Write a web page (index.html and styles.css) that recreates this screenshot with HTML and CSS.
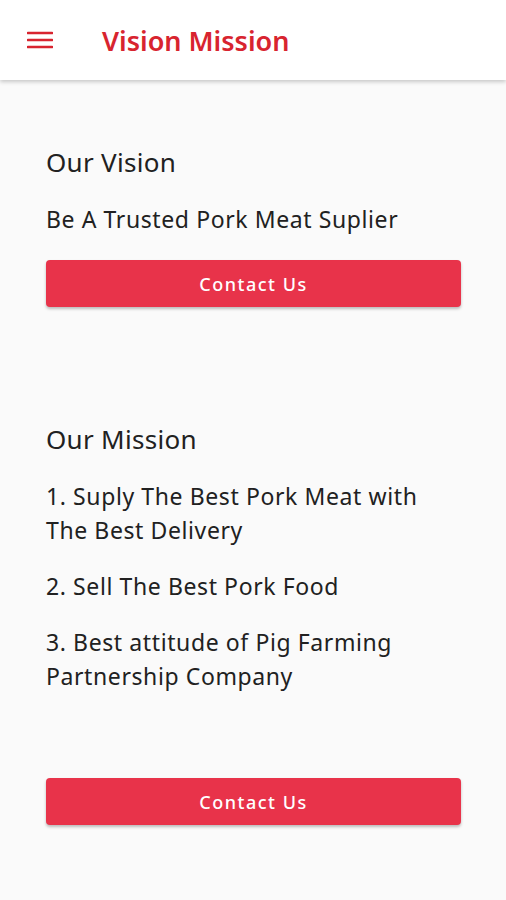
FILE: index.html
```html
<!DOCTYPE html>
<html lang="en">
<head>
    <meta charset="UTF-8">
    <meta name="viewport" content="width=device-width, initial-scale=1.0">
    <title>Vision Mission</title>
    <link rel="stylesheet" href="styles.css">
</head>
<body>
    <header class="app-bar">
        <button class="menu-btn" aria-label="Menu">
            <svg width="26" height="18" viewBox="0 0 26 18">
                <path d="M1 2h24M1 9h24M1 16h24" stroke="#d8242f" stroke-width="2.6" stroke-linecap="round"/>
            </svg>
        </button>
        <h1 class="app-title">Vision Mission</h1>
    </header>

    <main class="content">
        <section class="block vision">
            <h2>Our Vision</h2>
            <p>Be A Trusted Pork Meat Suplier</p>
            <button class="contact-btn">Contact Us</button>
        </section>

        <section class="block mission">
            <h2>Our Mission</h2>
            <p>1. Suply The Best Pork Meat with The Best Delivery</p>
            <p>2. Sell The Best Pork Food</p>
            <p>3. Best attitude of Pig Farming Partnership Company</p>
            <button class="contact-btn">Contact Us</button>
        </section>
    </main>
</body>
</html>
```

FILE: styles.css
```css
body {
    font-family: "Noto Sans", "Open Sans", sans-serif;
    margin: 0;
    padding: 0;
    background-color: #fafafa;
    color: #212121;
    height: 900px;
    overflow: hidden;
}
.app-bar {
    height: 80px;
    background: #ffffff;
    display: flex;
    align-items: center;
    box-shadow: 0 2px 4px rgba(0, 0, 0, 0.2);
    position: relative;
}
.menu-btn {
    background: none;
    border: none;
    padding: 0;
    margin-left: 27px;
    width: 26px;
    height: 18px;
    display: flex;
}
.app-title {
    margin: 0 0 0 49px;
    font-size: 27px;
    font-weight: 600;
    color: #d8242f;
}
.content {
    padding: 66px 45px 0 46px;
}
.block h2 {
    font-size: 26px;
    font-weight: 400;
    line-height: 32px;
    letter-spacing: 0.3px;
    margin: 0 0 24px;
}
.block p {
    font-size: 23px;
    line-height: 34px;
    letter-spacing: 0.6px;
    margin: 0 0 22px;
}
.vision p {
    margin-bottom: 24px;
}
.mission {
    margin-top: 116px;
}
.mission p:last-of-type {
    margin-bottom: 85px;
}
.contact-btn {
    display: block;
    width: 100%;
    height: 47px;
    border: none;
    border-radius: 4px;
    background-color: #e8334a;
    color: #ffffff;
    font-family: inherit;
    font-size: 18px;
    font-weight: 500;
    letter-spacing: 1.5px;
    box-shadow: 0 2px 3px rgba(0, 0, 0, 0.25);
}
```
